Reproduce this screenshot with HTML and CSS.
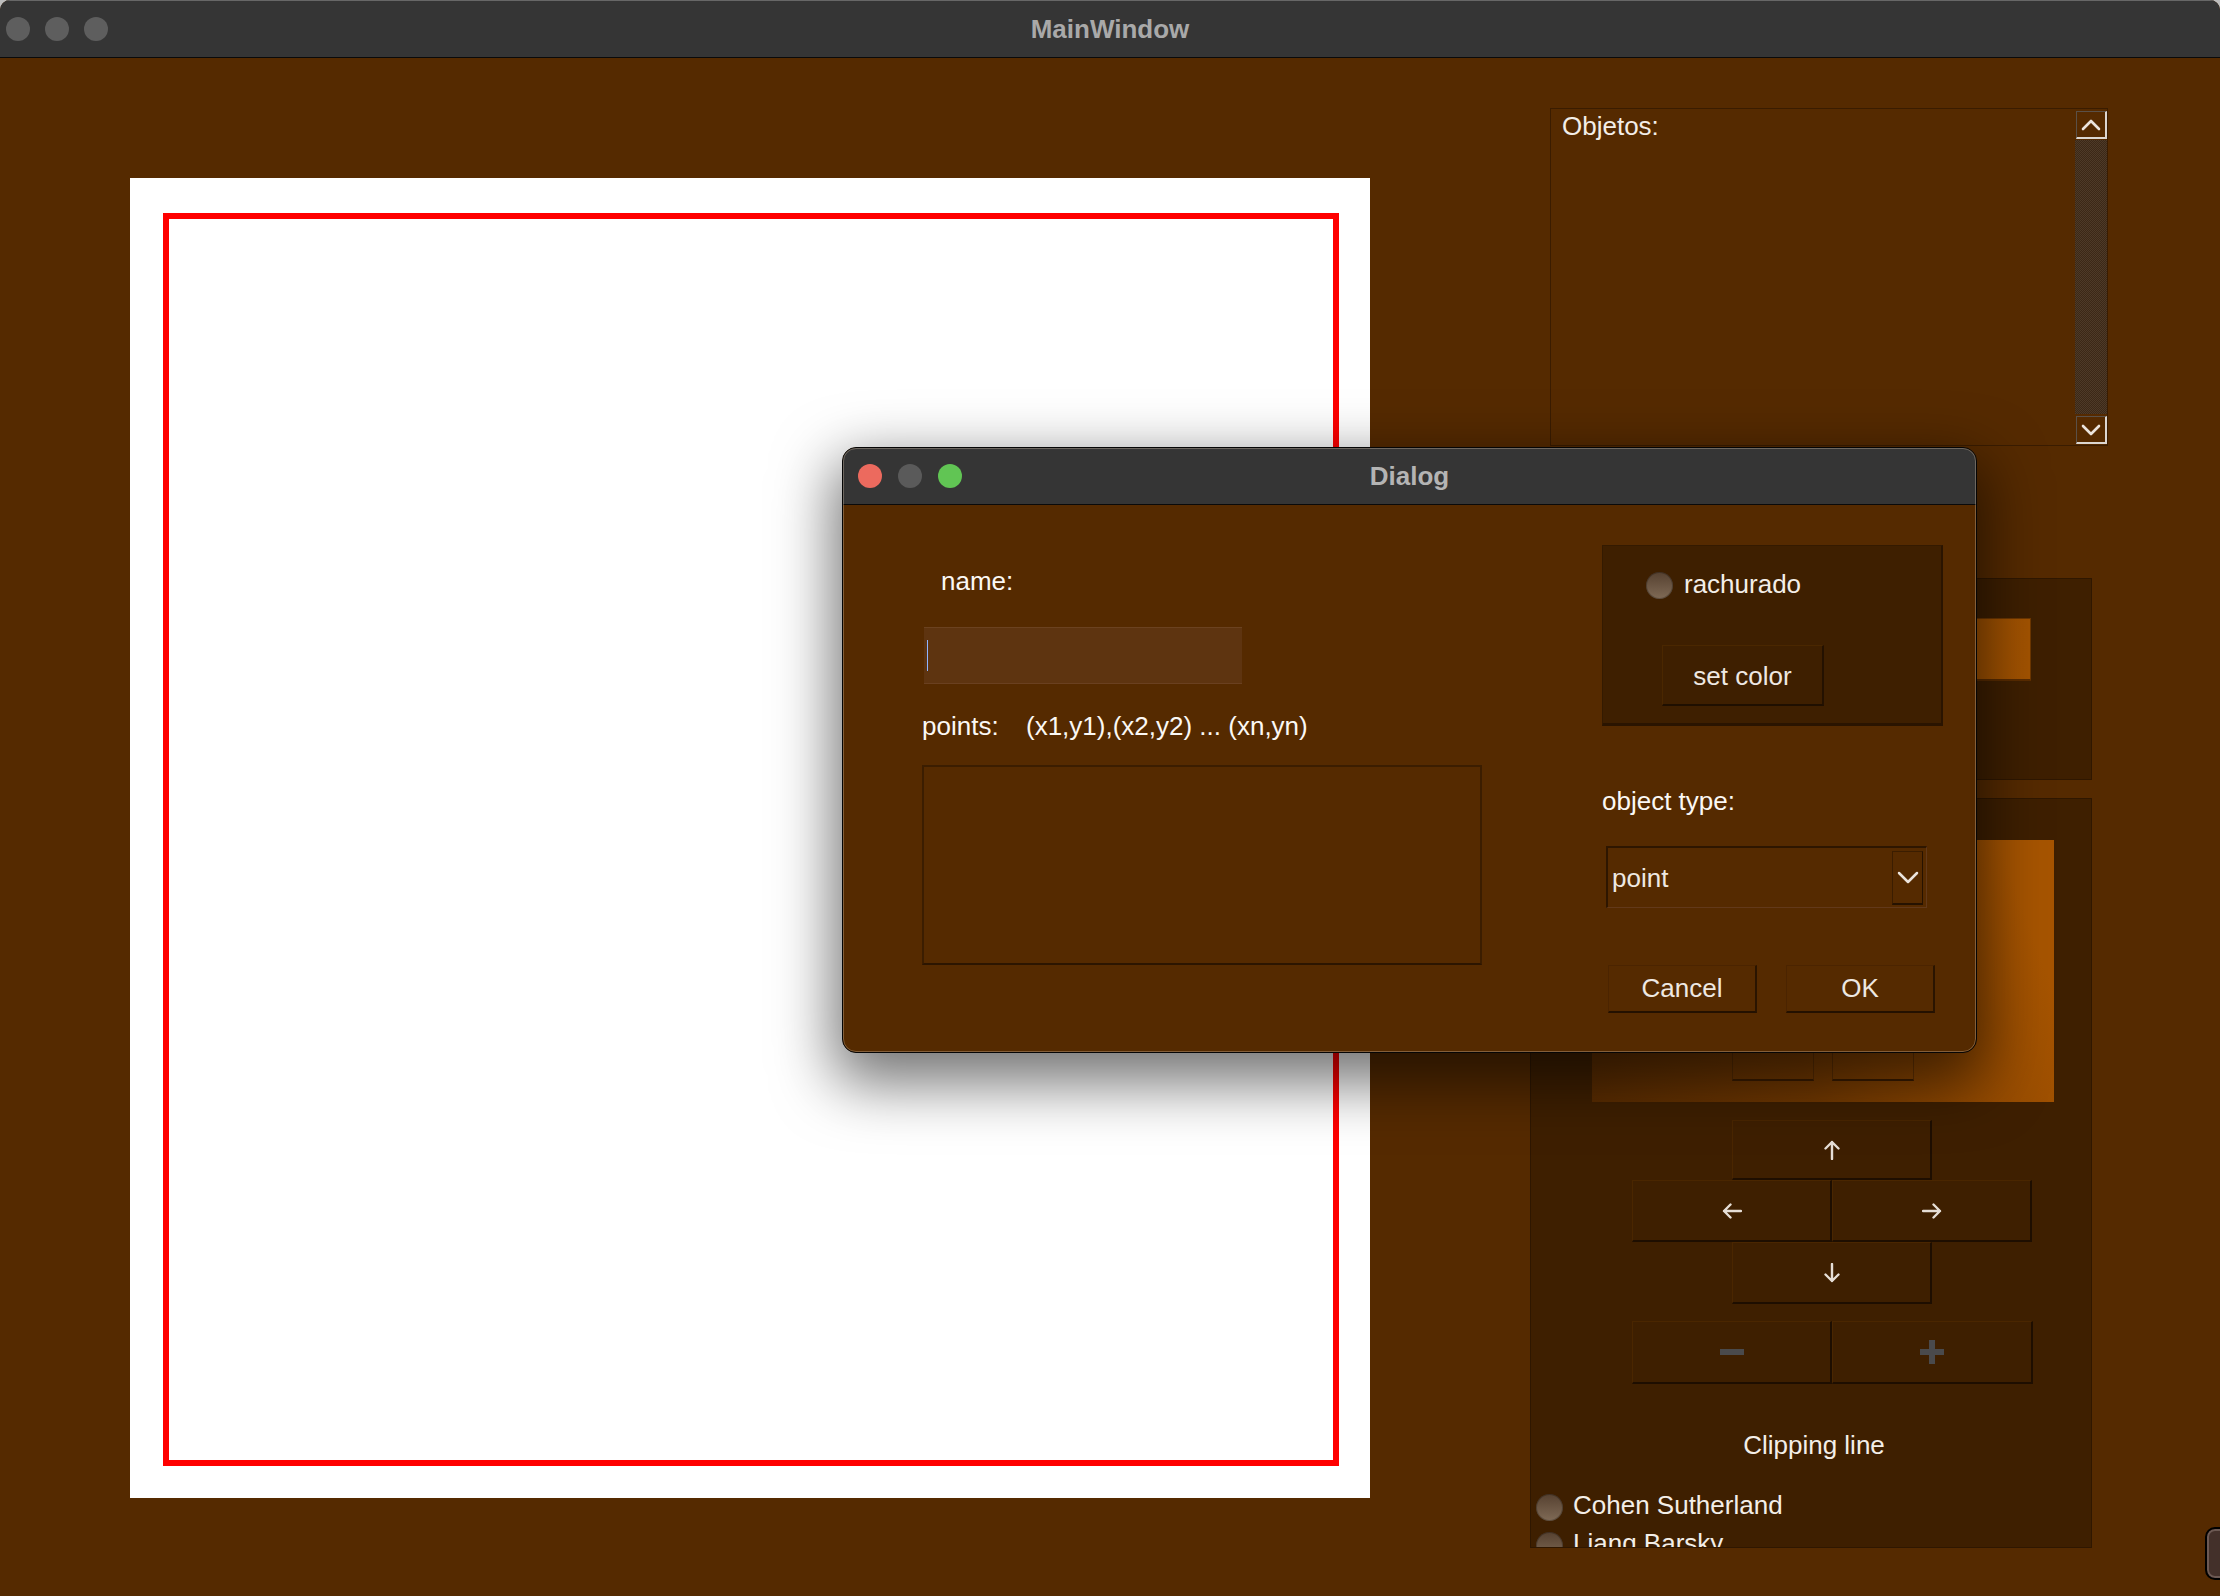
FILE: index.html
```html
<!DOCTYPE html>
<html>
<head>
<meta charset="utf-8">
<title>MainWindow</title>
<link rel="stylesheet" href="styles.css">
</head>
<body>
<div class="app">
  <div class="win">
    <div class="titlebar">
      <div class="lights main-lights">
        <span class="light off"></span><span class="light off"></span><span class="light off"></span>
      </div>
      <div class="title">MainWindow</div>
      <div></div>
    </div>
    <div class="content">
      <div class="canvas"><div class="viewport"></div></div>
      <div class="side">
        <div class="objlist">
          <div class="objlabel">Objetos:</div>
          <div class="scrollbar">
            <div class="sb-btn">
              <svg width="20" height="12" viewBox="0 0 20 12"><path d="M2 10 L10 2 L18 10" fill="none" stroke="#ece4dc" stroke-width="2.6" stroke-linecap="round" stroke-linejoin="round"/></svg>
            </div>
            <div class="sb-track"></div>
            <div class="sb-btn">
              <svg width="20" height="12" viewBox="0 0 20 12"><path d="M2 2 L10 10 L18 2" fill="none" stroke="#ece4dc" stroke-width="2.6" stroke-linecap="round" stroke-linejoin="round"/></svg>
            </div>
          </div>
        </div>
        <div class="panel panel-top"><div class="swatch"></div></div>
        <div class="panel panel-bottom">
          <div class="grad">
            <div class="gbtn"></div><div class="gbtn"></div>
          </div>
          <div class="pad">
            <div class="pbtn p-up"><svg width="18" height="20" viewBox="0 0 18 20"><path d="M9 19V2 M2.5 8.5 L9 2 L15.5 8.5" fill="none" stroke="#e6ded6" stroke-width="2.4" stroke-linecap="round" stroke-linejoin="round"/></svg></div>
            <div class="pbtn p-left"><svg width="20" height="18" viewBox="0 0 20 18"><path d="M19 9H2 M8.5 2.5 L2 9 L8.5 15.5" fill="none" stroke="#e6ded6" stroke-width="2.4" stroke-linecap="round" stroke-linejoin="round"/></svg></div>
            <div class="pbtn p-right"><svg width="20" height="18" viewBox="0 0 20 18"><path d="M1 9H18 M11.5 2.5 L18 9 L11.5 15.5" fill="none" stroke="#e6ded6" stroke-width="2.4" stroke-linecap="round" stroke-linejoin="round"/></svg></div>
            <div class="pbtn p-down"><svg width="18" height="20" viewBox="0 0 18 20"><path d="M9 1V18 M2.5 11.5 L9 18 L15.5 11.5" fill="none" stroke="#e6ded6" stroke-width="2.4" stroke-linecap="round" stroke-linejoin="round"/></svg></div>
          </div>
          <div class="zoomrow">
            <div class="pbtn"><span class="minus"></span></div>
            <div class="pbtn"><span class="plus"></span></div>
          </div>
          <div class="clip-title">Clipping line</div>
          <div class="radio-row"><span class="radio"></span><span>Cohen Sutherland</span></div>
          <div class="radio-row"><span class="radio"></span><span>Liang Barsky</span></div>
        </div>
      </div>
      <div class="edge-widget"></div>
    </div>
  </div>

  <div class="dialog">
    <div class="titlebar dlg-titlebar">
      <div class="lights dlg-lights">
        <span class="light red"></span><span class="light off2"></span><span class="light green"></span>
      </div>
      <div class="title dlg-title">Dialog</div>
      <div></div>
    </div>
    <div class="dlg-body">
      <div class="dlg-left">
        <div class="lbl lbl-name">name:</div>
        <div class="name-input"><span class="caret"></span></div>
        <div class="lbl lbl-points"><span class="pts">points:</span><span>(x1,y1),(x2,y2) ... (xn,yn)</span></div>
        <div class="points-area"></div>
      </div>
      <div class="dlg-right">
        <div class="group">
          <div class="radio-line"><span class="radio"></span><span>rachurado</span></div>
          <div class="btn setcolor">set color</div>
        </div>
        <div class="lbl lbl-type">object type:</div>
        <div class="combo">
          <span class="combo-text">point</span>
          <span class="combo-btn"><svg width="22" height="13" viewBox="0 0 22 13"><path d="M2 2 L11 11 L20 2" fill="none" stroke="#ece4dc" stroke-width="2.5" stroke-linecap="round" stroke-linejoin="round"/></svg></span>
        </div>
        <div class="btnrow">
          <div class="btn dlgbtn">Cancel</div>
          <div class="btn dlgbtn">OK</div>
        </div>
      </div>
    </div>
  </div>
</div>
</body>
</html>
```

FILE: styles.css
```css
html, body {
  margin: 0;
  padding: 0;
}
body {
  background: #bdbdbd;
  font-family: "Liberation Sans", Arial, sans-serif;
  font-size: 26px;
  color: #f3eee8;
}
.app {
  position: relative;
  width: 2220px;
  height: 1596px;
  overflow: hidden;
}
.win {
  width: 2220px;
  height: 1596px;
  display: flex;
  flex-direction: column;
  border-radius: 10px 10px 0 0;
  overflow: hidden;
  background: #552a00;
}

/* title bars */
.titlebar {
  height: 58px;
  box-sizing: border-box;
  background: #353535;
  border-top: 1px solid #676767;
  border-bottom: 1px solid #0a0a0a;
  display: grid;
  grid-template-columns: 1fr auto 1fr;
  align-items: center;
  flex-shrink: 0;
}
.title {
  font-weight: bold;
  color: #a9a9a9;
  line-height: 30px;
}
.lights {
  display: flex;
}
.light {
  width: 24px;
  height: 24px;
  border-radius: 50%;
  display: block;
}
.main-lights {
  padding-left: 6px;
  gap: 15px;
}
.light.off { background: #5e5e5e; }
.light.off2 { background: #5a5a5a; }
.light.red { background: #ec6a5e; }
.light.green { background: #61c554; }

/* main content */
.content {
  flex: 1;
  display: flex;
  align-items: flex-start;
  position: relative;
}
.canvas {
  margin: 120px 0 0 130px;
  width: 1240px;
  height: 1320px;
  flex-shrink: 0;
  box-sizing: border-box;
  background: #ffffff;
  padding: 35px 31px 32px 33px;
}
.viewport {
  width: 100%;
  height: 100%;
  box-sizing: border-box;
  border: 6px solid #ff0000;
}
.side {
  margin-left: 160px;
  width: 578px;
  display: flex;
  flex-direction: column;
  flex-shrink: 0;
}
.side > * {
  flex-shrink: 0;
}
.objlist {
  margin: 50px 0 0 20px;
  width: 558px;
  height: 338px;
  box-sizing: border-box;
  border: 1px solid #3a1c00;
  display: flex;
}
.objlabel {
  flex: 1;
  padding: 2px 0 0 11px;
  line-height: 30px;
}
.scrollbar {
  width: 32px;
  display: flex;
  flex-direction: column;
}
.sb-btn {
  height: 28px;
  box-sizing: border-box;
  margin: 2px 0 1px 1px;
  border-top: 1px solid #5a5048;
  border-left: 1px solid #5a5048;
  border-right: 2px solid #dcd6d0;
  border-bottom: 2px solid #dcd6d0;
  display: flex;
  align-items: center;
  justify-content: center;
  flex-shrink: 0;
}
.sb-track {
  flex: 1;
  background: repeating-conic-gradient(#4e3a28 0 25%, #3c2816 0 50%) 0 0 / 2px 2px;
}
.panel {
  width: 562px;
  box-sizing: border-box;
  background: #3e1f00;
  border: 1px solid #2f1700;
}
.panel-top {
  margin-top: 132px;
  height: 202px;
  padding: 39px 0 0 61px;
}
.swatch {
  width: 439px;
  height: 63px;
  box-sizing: border-box;
  background: linear-gradient(to right, #7a3c00, #9c4f00 60%, #a35300);
  border: 1px solid #6e3700;
  border-bottom: 2px solid #5a2c00;
}
.panel-bottom {
  margin-top: 18px;
  height: 750px;
  padding-top: 41px;
  overflow: hidden;
  display: flex;
  flex-direction: column;
}
.panel-bottom > * {
  flex-shrink: 0;
}
.grad {
  margin-left: 61px;
  width: 462px;
  height: 262px;
  background: linear-gradient(70deg, #5a2c00 0%, #713800 40%, #8e4700 65%, #a65400 90%);
  display: flex;
  align-items: flex-end;
  gap: 18px;
  padding: 0 0 21px 140px;
  box-sizing: border-box;
}
.gbtn {
  width: 82px;
  height: 61px;
  box-sizing: border-box;
  border: 1px solid rgba(60, 30, 0, 0.45);
  border-bottom: 2px solid #3a1c00;
}
.pad {
  margin: 18px 0 0 101px;
  display: grid;
  grid-template-columns: repeat(4, 100px);
  grid-template-rows: 60px 62px 62px;
}
.pbtn {
  box-sizing: border-box;
  background: #3e1f00;
  border-top: 1px solid #4a2600;
  border-left: 1px solid #4a2600;
  border-right: 2px solid #1e0e00;
  border-bottom: 2px solid #1e0e00;
  display: flex;
  align-items: center;
  justify-content: center;
}
.p-up { grid-column: 2 / 4; grid-row: 1; }
.p-left { grid-column: 1 / 3; grid-row: 2; }
.p-right { grid-column: 3 / 5; grid-row: 2; }
.p-down { grid-column: 2 / 4; grid-row: 3; }
.zoomrow {
  margin: 17px 0 0 101px;
  display: grid;
  grid-template-columns: 200px 201px;
  height: 63px;
}
.minus {
  width: 24px;
  height: 6px;
  background: #4a4a4c;
  display: block;
}
.plus {
  width: 24px;
  height: 24px;
  display: block;
  background:
    linear-gradient(#4a4a4c, #4a4a4c) center / 24px 6px no-repeat,
    linear-gradient(#4a4a4c, #4a4a4c) center / 6px 24px no-repeat;
}
.clip-title {
  margin-top: 46px;
  text-align: center;
  line-height: 30px;
  padding-left: 6px;
}
.radio-row {
  display: flex;
  align-items: center;
  height: 38px;
  gap: 10px;
  padding-left: 5px;
  line-height: 30px;
}
.clip-title + .radio-row {
  margin-top: 26px;
}
.radio {
  width: 27px;
  height: 27px;
  border-radius: 50%;
  flex-shrink: 0;
  background: linear-gradient(to bottom, #564130, #7f6a56);
  box-shadow: inset 0 0 0 1px rgba(0, 0, 0, 0.25);
  margin-top: 4px;
}
.edge-widget {
  position: absolute;
  left: 2205px;
  top: 1469px;
  width: 60px;
  height: 53px;
  box-sizing: border-box;
  border-radius: 10px;
  background: #43302a;
  border: 2px solid #000;
  box-shadow: inset 0 0 0 2px #6c5953;
}

/* dialog */
.dialog {
  position: absolute;
  left: 842px;
  top: 447px;
  width: 1135px;
  height: 606px;
  box-sizing: border-box;
  border: 1px solid #050505;
  border-radius: 14px;
  overflow: hidden;
  background: #552a00;
  box-shadow: 0 22px 60px 8px rgba(0, 0, 0, 0.55);
  display: flex;
  flex-direction: column;
}
.dialog::after {
  content: "";
  position: absolute;
  inset: 0;
  border: 1px solid rgba(255, 235, 210, 0.28);
  border-radius: 13px;
  pointer-events: none;
}
.dlg-titlebar {
  height: 57px;
  border-top: none;
}
.dlg-lights {
  padding-left: 15px;
  gap: 16px;
}
.dlg-title {
  color: #b4b4b4;
}
.dlg-body {
  flex: 1;
  display: grid;
  grid-template-columns: 560px 341px;
  column-gap: 120px;
  padding-left: 79px;
  align-items: start;
}
.lbl {
  line-height: 30px;
  color: #fbf8f4;
}
.dlg-left {
  display: flex;
  flex-direction: column;
}
.lbl-name {
  margin: 61px 0 0 19px;
}
.name-input {
  margin: 31px 0 0 2px;
  width: 318px;
  height: 57px;
  box-sizing: border-box;
  background: #5e3410;
  border-top: 1px solid #6b4220;
  border-bottom: 1px solid #6a4020;
  padding: 12px 0 0 3px;
}
.caret {
  display: block;
  width: 1px;
  height: 31px;
  background: #8fb4ff;
}
.lbl-points {
  margin-top: 27px;
  display: flex;
}
.pts {
  width: 104px;
}
.points-area {
  margin-top: 24px;
  width: 560px;
  height: 200px;
  box-sizing: border-box;
  border: 2px solid #3b1d00;
  border-bottom-color: #2c1500;
}
.dlg-right {
  display: flex;
  flex-direction: column;
}
.group {
  margin-top: 40px;
  width: 341px;
  height: 181px;
  box-sizing: border-box;
  background: #3e1f00;
  border: 1px solid #341a00;
  border-right: 2px solid #2a1400;
  border-bottom: 3px solid #2a1400;
  padding: 23px 0 0 43px;
}
.radio-line {
  display: flex;
  align-items: center;
  gap: 11px;
  height: 30px;
  line-height: 30px;
}
.radio-line .radio {
  margin-top: 2px;
}
.btn {
  box-sizing: border-box;
  display: flex;
  align-items: center;
  justify-content: center;
  color: #eee8e2;
  border-top: 1px solid #4a2700;
  border-left: 1px solid #4a2700;
  border-right: 2px solid #241100;
  border-bottom: 2px solid #1f0f00;
}
.setcolor {
  margin: 46px 0 0 16px;
  width: 162px;
  height: 61px;
  background: #3e1f00;
  padding-top: 2px;
}
.lbl-type {
  margin-top: 60px;
}
.combo {
  margin: 30px 0 0 4px;
  width: 321px;
  height: 62px;
  box-sizing: border-box;
  border-top: 2px solid #2e1600;
  border-left: 2px solid #2e1600;
  border-right: 1px solid #62391a;
  border-bottom: 1px solid #62391a;
  display: flex;
  align-items: center;
  padding: 0 3px 0 4px;
}
.combo-text {
  flex: 1;
  color: #eee8e2;
  line-height: 30px;
}
.combo-btn {
  width: 31px;
  height: 54px;
  box-sizing: border-box;
  border-left: 1px solid #3b1d00;
  border-top: 1px solid #3b1d00;
  border-bottom: 2px solid #261200;
  border-right: 1px solid #261200;
  display: flex;
  align-items: center;
  justify-content: center;
}
.btnrow {
  margin: 57px 0 0 6px;
  display: flex;
  gap: 29px;
}
.dlgbtn {
  width: 149px;
  height: 48px;
  background: #552a00;
  border-top: 1px solid #4b2400;
  border-left: 1px solid #4b2400;
  border-right: 2px solid #2a1400;
  border-bottom: 2px solid #241100;
}
```
